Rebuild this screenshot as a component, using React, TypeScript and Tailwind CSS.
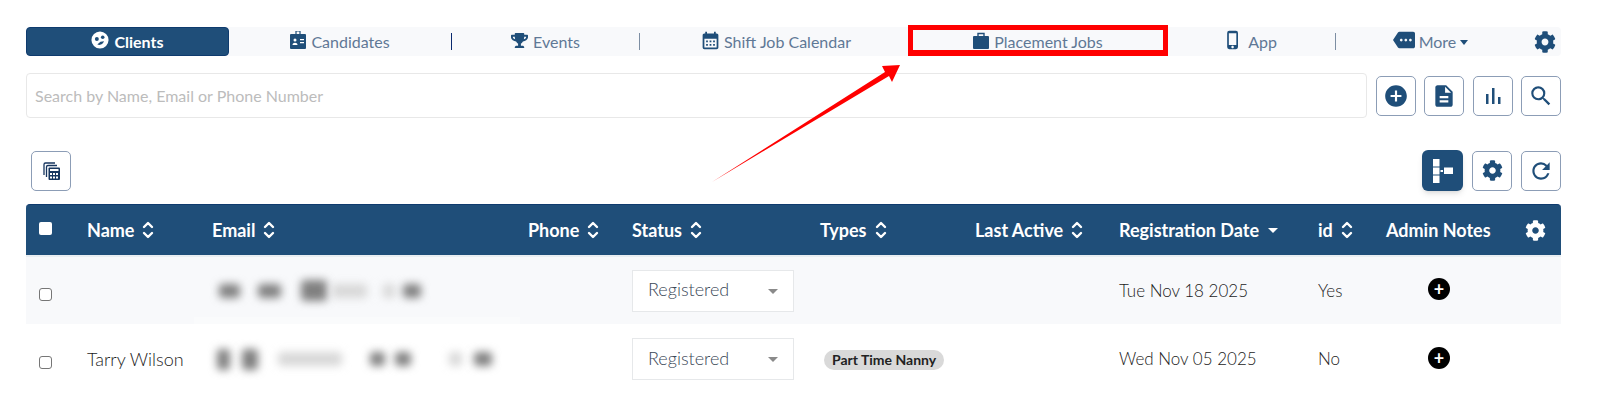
import { ReactNode } from 'react'
import { FaTrophy, FaCog } from 'react-icons/fa'
import {
  MdCalendarMonth,
  MdPhoneIphone,
  MdMore,
  MdAddCircle,
  MdDescription,
  MdSearch,
  MdRefresh,
  MdArrowDropDown,
} from 'react-icons/md'

const FONT = "font-['Lato',_'Noto_Sans',_sans-serif]"

function ClientFace({ className }: { className?: string }) {
  return (
    <svg viewBox="0 0 20 20" className={className}>
      <circle cx="10" cy="10" r="9.5" fill="#fff" />
      <circle cx="6.5" cy="9" r="2.2" fill="#1f4e79" />
      <circle cx="13" cy="7" r="2" fill="#1f4e79" />
      <path d="M7 15c3 1.2 6 .2 7.5-3.500l-4 .5z" fill="#1f4e79" />
    </svg>
  )
}

function BadgeIcon() {
  return (
    <svg viewBox="0 0 16 18" className="w-[16px] h-[18px] -mt-[3px]">
      <path d="M6 0h4v4H6z" fill="none" stroke="#1f4e79" strokeWidth="1.200" />
      <rect x="0" y="3" width="16" height="15" rx="1" fill="#1f4e79" />
      <circle cx="5" cy="9" r="1.500" fill="#fff" />
      <path d="M2.500 14c0-3 5-3 5 0z" fill="#fff" />
      <path d="M10 8h4v1.200h-4zM10 11h4v1.200h-4z" fill="#fff" />
    </svg>
  )
}

function SuitcaseIcon() {
  return (
    <svg viewBox="0 0 16 17" className="w-[16px] h-[17px] -mt-[3px]">
      <path d="M5 5V1.500h6V5" fill="none" stroke="#1f4e79" strokeWidth="1.400" />
      <rect x="0" y="4" width="16" height="13" rx="1" fill="#1f4e79" />
    </svg>
  )
}

function BarsIcon() {
  return (
    <svg viewBox="0 0 20 20" className="w-5 h-5" fill="#1f4e79">
      <rect x="3" y="8" width="2.500" height="10" />
      <rect x="9" y="2" width="2.500" height="16" />
      <rect x="15" y="11" width="2.500" height="7" />
    </svg>
  )
}

function CalcStack() {
  return (
    <svg viewBox="0 0 20 20" className="w-5 h-5">
      <path d="M3 14V3.500A1.500 1.500 0 0 1 4.500 2H14" fill="none" stroke="#17365f" strokeWidth="1.300" />
      <path d="M5.500 16V6A1.500 1.500 0 0 1 7 4.500h9" fill="none" stroke="#17365f" strokeWidth="1.300" />
      <rect x="7.500" y="6.500" width="11.500" height="12.500" rx="1" fill="#17365f" />
      <rect x="9" y="8" width="8.500" height="2" fill="#fff" />
      {[9, 12, 15].map((x) => (
        <g key={x} fill="#fff">
          <rect x={x} y="12" width="2" height="2" />
          <rect x={x} y="15.500" width="2" height="2" />
        </g>
      ))}
    </svg>
  )
}

function TreeIcon() {
  return (
    <svg viewBox="0 0 20 24" className="w-5 h-6" fill="#fff">
      <rect x="0" y="0" width="6.500" height="7.500" />
      <rect x="0" y="8.500" width="6.500" height="7" />
      <rect x="0" y="16.500" width="6.500" height="7.500" />
      <rect x="7.500" y="11" width="2.500" height="2" />
      <rect x="11" y="8.500" width="9" height="6.500" />
    </svg>
  )
}

function SortIcon() {
  return (
    <svg viewBox="0 0 12 20" className="w-[12px] h-[20px]" fill="none" stroke="#fff" strokeWidth="2.400" strokeLinecap="round" strokeLinejoin="round">
      <path d="M2 7l4-4 4 4" />
      <path d="M2 13l4 4 4-4" />
    </svg>
  )
}

function NavItem({ icon, label, className }: { icon: ReactNode; label: string; className: string }) {
  return (
    <div className={`flex items-center justify-center gap-[5px] text-[16px] text-[#5f7896] ${className}`}>
      {icon}
      <span className="mt-[1px]">{label}</span>
    </div>
  )
}

function Divider({ color }: { color: string }) {
  return <div className={`w-[1px] h-[17px] shrink-0 ${color}`} />
}

function IconButton({ children }: { children: ReactNode }) {
  return (
    <button className="w-[40px] h-[40px] flex items-center justify-center rounded-[5px] border border-[#8c9db6] bg-white text-[#1f4e79]">
      {children}
    </button>
  )
}

function HeadCell({ label, sort = true, className = '' }: { label: string; sort?: boolean; className?: string }) {
  return (
    <div className={`flex items-center gap-[8px] text-[18px] font-bold text-white whitespace-nowrap ${className}`}>
      <span>{label}</span>
      {sort && <SortIcon />}
    </div>
  )
}

function Blob({ w, left, dark = true, tall = false }: { w: number; left: number; dark?: boolean; tall?: boolean }) {
  return (
    <span
      className={`block rounded-sm blur-[4px] ${tall ? 'h-[21px]' : 'h-[14px]'} ${dark ? 'bg-[#808080]' : 'bg-[#d8d8d8]'}`}
      style={{ width: w, marginLeft: left }}
    />
  )
}

function StatusSelect() {
  return (
    <div className="w-[162px] h-[42px] flex items-center justify-between pl-[15px] pr-[8px] border border-[#e6e8ea] bg-white text-[18px] font-light text-[#3a4857]">
      <span className="-mt-[2px]">Registered</span>
      <MdArrowDropDown className="w-6 h-6 text-[#8a8a8a]" />
    </div>
  )
}

function Checkbox() {
  return <span className="block mt-[7px] ml-[13px] w-[13px] h-[13px] rounded-[3px] border border-[#767676] bg-white" />
}

function PlusCell() {
  return (
    <div className="pl-[42px]">
      <span className="w-[22px] h-[22px] -mt-[3px] rounded-full bg-black text-white flex items-center justify-center text-[18px] font-bold leading-none">
        +
      </span>
    </div>
  )
}

function Row({ bg, name, blobs, pill, date, id }: {
  bg: string
  name: string
  blobs: ReactNode
  pill?: string
  date: string
  id: string
}) {
  return (
    <div className={`grid grid-cols-[61px_125px_316px_104px_188px_155px_144px_199px_68px_139px_36px] items-center text-[#1c1c1c] ${bg}`}>
      <Checkbox />
      <div className="whitespace-nowrap text-[18px] font-light">{name}</div>
      <div className="flex items-center h-[30px] pl-[5px]">{blobs}</div>
      <div />
      <StatusSelect />
      <div>
        {pill && (
          <span className="inline-block ml-[4px] mt-[3px] px-2 h-[20px] leading-[20px] rounded-full bg-[#d9d9d9] text-[14px] font-bold text-[#222] whitespace-nowrap">
            {pill}
          </span>
        )}
      </div>
      <div />
      <div className="text-[17px] font-light">{date}</div>
      <div className="text-[17px] font-light">{id}</div>
      <PlusCell />
      <div />
    </div>
  )
}

export default function App() {
  return (
    <div className={`relative w-[1600px] h-[419px] overflow-hidden bg-white pt-[27px] pl-[26px] ${FONT}`}>
      <div className="w-[1535px]">
        {/* top nav */}
        <div className="flex items-center h-[29px] rounded-[4px] bg-[#f8f9fb]">
          <div className="w-[203px] h-[29px] flex items-center justify-center gap-[5px] rounded-[4px] border border-[#0f3b6e] bg-[#1f4e79] text-[16px] font-bold text-white">
            <ClientFace className="w-[18px] h-[18px] -mt-[3px]" />
            <span>Clients</span>
          </div>
          <NavItem className="w-[222px]" label="Candidates" icon={<BadgeIcon />} />
          <Divider color="bg-[#0a2a6e]" />
          <NavItem className="w-[187px]" label="Events" icon={<FaTrophy className="w-[17px] h-[17px] text-[#1f4e79] -mt-[3px]" />} />
          <Divider color="bg-[#7d8ea3]" />
          <NavItem className="w-[271px]" label="Shift Job Calendar" icon={<MdCalendarMonth className="w-[21px] h-[21px] -mr-[2px] text-[#1f4e79] -mt-[3px]" />} />
          <NavItem className="w-[254px]" label="Placement Jobs" icon={<SuitcaseIcon />} />
          <NavItem className="w-[170px]" label="App" icon={<MdPhoneIphone className="w-[20px] h-[22px] text-[#1f4e79] -mt-[3px]" />} />
          <Divider color="bg-[#7d8ea3]" />
          <div className="w-[189px] flex items-center justify-center gap-[4px] text-[16px] text-[#5f7896]">
            <MdMore className="w-[22px] h-[22px] text-[#1f4e79] -mt-[3px]" />
            <span>More</span>
            <span className="w-0 h-0 border-x-[4px] border-x-transparent border-t-[5px] border-t-[#1f4e79] mt-[2px]" />
          </div>
          <FaCog className="w-[22px] h-[22px] ml-[9px] text-[#1f4e79]" />
        </div>

        {/* search */}
        <div className="flex items-center gap-[8.500px] mt-[17px]">
          <div className="flex-1 h-[45px] flex items-center pl-[8px] pt-[1px] rounded-[4px] border border-[#e8e8e8] text-[16px] text-[#bcbcbc]">
            Search by Name, Email or Phone Number
          </div>
          <IconButton><MdAddCircle className="w-[26px] h-[26px]" /></IconButton>
          <IconButton><MdDescription className="w-[26px] h-[26px]" /></IconButton>
          <IconButton><BarsIcon /></IconButton>
          <IconButton><MdSearch className="w-[26px] h-[26px]" /></IconButton>
        </div>

        {/* tools */}
        <div className="flex items-center justify-between mt-[32px] pl-[5px]">
          <IconButton><CalcStack /></IconButton>
          <div className="flex items-center gap-[9px]">
            <button className="w-[41px] h-[41px] flex items-center justify-center rounded-[6px] bg-[#1f4e79] shadow-md">
              <TreeIcon />
            </button>
            <IconButton><FaCog className="w-[21px] h-[21px]" /></IconButton>
            <IconButton><MdRefresh className="w-[26px] h-[26px]" /></IconButton>
          </div>
        </div>

        {/* table */}
        <div className="mt-[13px]">
          <div className="grid grid-cols-[61px_125px_316px_104px_188px_155px_144px_199px_68px_139px_36px] items-center h-[51px] rounded-t-[4px] border-t border-[#0f3b6e] bg-[#1f4e79]">
            <span className="block ml-[13px] -mt-[3px] w-[13px] h-[13px] rounded-[2px] bg-white" />
            <HeadCell label="Name" />
            <HeadCell label="Email" />
            <HeadCell label="Phone" />
            <HeadCell label="Status" />
            <HeadCell label="Types" />
            <HeadCell label="Last Active" />
            <div className="flex items-center gap-[2px] text-[18px] font-bold text-white whitespace-nowrap">
              <span>Registration Date</span>
              <MdArrowDropDown className="w-6 h-6" />
            </div>
            <HeadCell label="id" />
            <HeadCell label="Admin Notes" sort={false} />
            <FaCog className="w-[21px] h-[21px] text-white" />
          </div>
          <div className="h-[2px] bg-[#e9eef2]" />
          <div className="relative h-[67px] flex flex-col justify-center bg-[#f8f9fb]">
            <Row
              bg="bg-[#f8f9fb]"
              name=""
              date="Tue Nov 18 2025"
              id="Yes"
              blobs={
                <>
                  <Blob w={21} left={2} />
                  <Blob w={23} left={18} />
                  <Blob w={26} left={20} tall />
                  <Blob w={35} left={5} dark={false} />
                  <Blob w={12} left={16} dark={false} />
                  <Blob w={18} left={8} />
                </>
              }
            />
            {/* lighter patch left by the blur at the bottom of the email cell */}
            <div className="absolute left-[168px] bottom-0 w-[326px] h-[7px] bg-white/30" />
          </div>
          <div className="h-[70px] flex flex-col justify-center">
            <Row
              bg="bg-white"
              name="Tarry Wilson"
              pill="Part Time Nanny"
              date="Wed Nov 05 2025"
              id="No"
              blobs={
                <>
                  <Blob w={13} left={0} tall />
                  <Blob w={16} left={12} tall />
                  <Blob w={64} left={20} dark={false} />
                  <Blob w={15} left={28} />
                  <Blob w={16} left={10} />
                  <Blob w={13} left={38} dark={false} />
                  <Blob w={18} left={12} />
                </>
              }
            />
          </div>
        </div>
      </div>

      {/* annotation drawn over the screenshot */}
      <div className="absolute left-[908px] top-[25px] w-[260px] h-[31px] border-[5px] border-b-[6px] border-[#ff0000]" />
      <svg className="absolute left-0 top-0 pointer-events-none" width="1600" height="419">
        <polygon points="712,182 885,72 882,66 900,65 892,82 889,76" fill="#ff0000" />
      </svg>
    </div>
  )
}
